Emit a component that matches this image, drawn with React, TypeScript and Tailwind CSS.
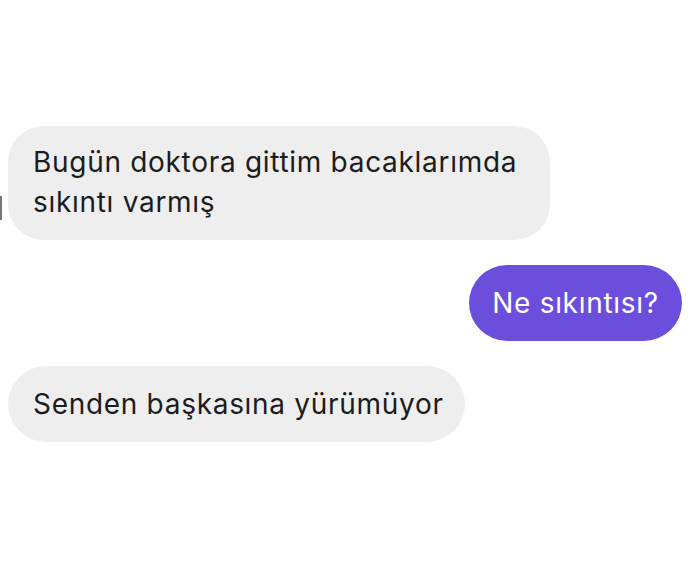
export default function App() {
  return (
    <div
      className="relative w-[690px] h-[587px] bg-white overflow-hidden tracking-[0.7px]"
      style={{ fontFamily: 'Inter, "Liberation Sans", Arial, sans-serif' }}
    >
      <div className="absolute left-0 top-[196px] w-[2px] h-[24px] bg-[#777]" />
      <div className="flex flex-col pt-[126px] px-[8px]">
        <div className="self-start w-[542px] h-[114px] rounded-[36px] bg-[#eeeeee] pl-[25px] pt-[16px] text-[28px] leading-[40px] text-[#1c1c1c]">
          Bugün doktora gittim bacaklarımda
          <br />
          sıkıntı varmış
        </div>
        <div className="self-end mt-[25px] h-[76px] w-[213px] rounded-[38px] bg-[#6b4fdc] flex items-center justify-center text-[28px] text-white">
          Ne sıkıntısı?
        </div>
        <div className="self-start mt-[25px] h-[76px] w-[457px] rounded-[38px] bg-[#eeeeee] pl-[25px] flex items-center text-[28px] text-[#1c1c1c]">
          Senden başkasına yürümüyor
        </div>
      </div>
    </div>
  )
}
